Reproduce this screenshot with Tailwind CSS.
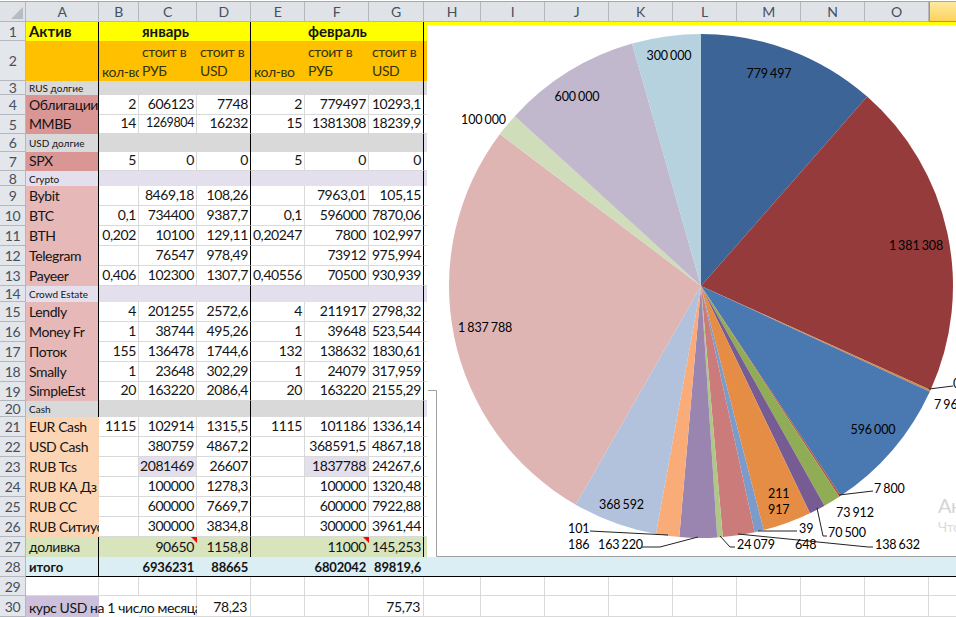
<!DOCTYPE html>
<html lang="en">

<head>
    <meta charset="UTF-8" />
    <title>Активы</title>
    <script src="https://cdn.jsdelivr.net/npm/@tailwindcss/browser@4"></script>
</head>

<body class="bg-white h-screen overflow-hidden">
    <div class="relative mt-px w-[956px] h-[616px] overflow-hidden border-t border-[#a8a8a8] font-['Lato','Noto_Sans',sans-serif] text-[14px] tracking-[-0.4px] text-[#141414]">
        <!-- Sheet -->
        <div id="sheet"
            class="grid grid-cols-[26px_73px_40px_58px_54px_54px_64px_55px_57px_64px_64px_64px_64px_64px_64px_64px_64px] grid-rows-[20px_19px_40px_14px_20px_19px_18px_19px_15px_20px_20px_20px_20px_20px_16px_20px_20px_20px_20px_19px_16px_20px_20px_20px_20px_20px_20px_20px_20px_19px_21px]">
        </div>

        <!-- Chart -->
        <div class="absolute left-[427px] top-[23px] w-[530px] h-[532px] bg-white">
            <svg id="pie" width="530" height="532" viewBox="427 25 530 532" class="block"></svg>
        </div>
        <div class="absolute left-[938px] top-[493px] text-[20px] text-[#d4d4d4] leading-none">Ак</div>
        <div class="absolute left-[938px] top-[518px] text-[14px] text-[#dcdcdc] leading-none">Что</div>
    </div>

    <script>
        const colLetters = ["A", "B", "C", "D", "E", "F", "G", "H", "I", "J", "K", "L", "M", "N", "O", "P"];
        const PINK = "bg-[#e6b8b7]", ROSE = "bg-[#da9694]", PEACH = "bg-[#fcd5b4]";

        // [number, label, A fill, values B..G]
        const rows = [
            [4, "Облигации", ROSE, ["2", "606123", "7748", "2", "779497", "10293,1"]],
            [5, "ММВБ", ROSE, ["14", "1269804", "16232", "15", "1381308", "18239,9"]],
            [7, "SPX", ROSE, ["5", "0", "0", "5", "0", "0"]],
            [9, "Bybit", PINK, ["", "8469,18", "108,26", "", "7963,01", "105,15"]],
            [10, "BTC", PINK, ["0,1", "734400", "9387,7", "0,1", "596000", "7870,06"]],
            [11, "BTH", PINK, ["0,202", "10100", "129,11", "0,20247", "7800", "102,997"]],
            [12, "Telegram", PINK, ["", "76547", "978,49", "", "73912", "975,994"]],
            [13, "Payeer", PINK, ["0,406", "102300", "1307,7", "0,40556", "70500", "930,939"]],
            [15, "Lendly", PINK, ["4", "201255", "2572,6", "4", "211917", "2798,32"]],
            [16, "Money Fr", PINK, ["1", "38744", "495,26", "1", "39648", "523,544"]],
            [17, "Поток", PINK, ["155", "136478", "1744,6", "132", "138632", "1830,61"]],
            [18, "Smally", PINK, ["1", "23648", "302,29", "1", "24079", "317,959"]],
            [19, "SimpleEst", PINK, ["20", "163220", "2086,4", "20", "163220", "2155,29"]],
            [21, "EUR Cash", PEACH, ["1115", "102914", "1315,5", "1115", "101186", "1336,14"]],
            [22, "USD Cash", PEACH, ["", "380759", "4867,2", "", "368591,5", "4867,18"]],
            [23, "RUB Tcs", PEACH, ["", "2081469", "26607", "", "1837788", "24267,6"]],
            [24, "RUB КА Дз", PEACH, ["", "100000", "1278,3", "", "100000", "1320,48"]],
            [25, "RUB CC", PEACH, ["", "600000", "7669,7", "", "600000", "7922,88"]],
            [26, "RUB Ситиус", PEACH, ["", "300000", "3834,8", "", "300000", "3961,44"]],
        ];
        const sections = {
            3: ["RUS долгие", "bg-[#d9d9d9]", "bg-[#d9d9d9]"],
            6: ["USD долгие", "bg-[#d9d9d9]", "bg-[#e4dfec]"],
            8: ["Crypto", "bg-[#e4dfec]", "bg-[#e4dfec]"],
            14: ["Crowd Estate", "bg-[#e4dfec]", "bg-[#e4dfec]"],
            20: ["Cash", "bg-[#d9d9d9]", "bg-[#e4dfec]"],
        };

        const sheet = document.getElementById("sheet");
        const GRID = "border-r border-b border-[#d9d9d9]";
        const RULE = "border-r border-r-black";
        const BOLD = "font-bold text-[15px] tracking-normal pl-[3px] items-center";
        let html = "";

        function cell(cls, text = "", align = "items-end") {
            html += `<div class="flex ${align} whitespace-nowrap ${cls}">${text}</div>`;
        }
        function clip(cls, text = "") {
            cell(`overflow-hidden ${cls}`, text);
        }
        function rowHead(n) {
            html += `<div class="flex items-center justify-center bg-[#e3e6ea] border-r border-b border-[#b4b8be] text-[#46505e]">${n}</div>`;
        }
        // vertical rule at the right of D and G
        function fill(cls) {
            for (let c = 1; c <= 6; c++) cell(`${cls} ${c === 3 || c === 6 ? RULE : ""}`);
        }
        function emptyRight(cls, count = 9) {
            for (let i = 0; i < count; i++) cell(cls);
        }

        // Column headers
        html += `<div class="bg-[#dfe3e8] border-r border-b border-[#b4b8be] flex items-end justify-end p-[2px]"><span class="w-0 h-0 border-l-[12px] border-l-transparent border-b-[12px] border-b-[#b6bcc4]"></span></div>`;
        colLetters.forEach(l => {
            if (l === "P") {
                html += `<div class="border-l border-b border-[#c8913a] bg-[linear-gradient(#fee9a0,#fdd25c)]"></div>`;
            } else {
                html += `<div class="flex items-center justify-center border-r border-b border-[#b4b8be] bg-[#dfe3e8] text-[#46505e]">${l}</div>`;
            }
        });

        // Row 1
        rowHead(1);
        cell(`bg-[#ffff00] ${RULE} ${BOLD}`, "Актив", "");
        cell("bg-[#ffff00]");
        cell(`bg-[#ffff00] ${BOLD}`, "январь", "");
        cell(`bg-[#ffff00] ${RULE}`);
        cell("bg-[#ffff00]");
        cell(`bg-[#ffff00] ${BOLD}`, "февраль", "");
        cell(`bg-[#ffff00] ${RULE}`);
        emptyRight("bg-[#ffff00]");

        // Row 2
        rowHead(2);
        const head2 = "bg-[#ffc000] text-[#33330c] pl-[3px] leading-[19px] pt-[1px]";
        cell(`bg-[#ffc000] ${RULE}`);
        clip("bg-[#ffc000] text-[#33330c] pl-[3px] leading-[18px]", "кол-во");
        cell(head2, "стоит в<br>РУБ", "items-start");
        cell(`${head2} ${RULE}`, "стоит в<br>USD", "items-start");
        clip("bg-[#ffc000] text-[#33330c] pl-[3px] leading-[18px]", "кол-во");
        cell(head2, "стоит в<br>РУБ", "items-start");
        cell(`${head2} ${RULE}`, "стоит в<br>USD", "items-start");
        emptyRight("bg-[#ffc000]");

        // Rows 3..26
        for (let n = 3; n <= 26; n++) {
            rowHead(n);
            if (sections[n]) {
                const [label, bg, right] = sections[n];
                cell(`${bg} ${RULE} text-[10px] tracking-normal leading-none pl-[3px]`, label, "items-center");
                fill(bg);
                cell(right);
                emptyRight("bg-white", 8);
                continue;
            }
            const [, name, aFill, vals] = rows.find(r => r[0] === n);
            clip(`${aFill} ${n <= 19 ? RULE : ""} pl-[3px] leading-[21px]`, name);
            vals.forEach((v, i) => {
                const edge = (i === 2 || i === 5) ? `border-b border-b-[#d9d9d9] ${RULE}` : GRID;
                const tint = n === 23 && (i === 1 || i === 4) ? "bg-[#e4dfec]" : "";
                const size = n === 5 && i === 1 ? "text-[12.5px]" : "";
                cell(`${edge} ${tint} ${size} justify-end pr-[2px] leading-[21px]`, v);
            });
            emptyRight(GRID);
        }

        // Row 27
        rowHead(27);
        const GREEN = "bg-[#d8e4bc] leading-[21px]";
        const flag = `<span class="absolute right-0 top-0 w-0 h-0 border-l-[6px] border-l-transparent border-t-[6px] border-t-[#ff0000]"></span>`;
        cell(`${GREEN} ${RULE} pl-[3px]`, "доливка");
        cell(GREEN);
        cell(`${GREEN} relative justify-end pr-[3px]`, `90650${flag}`);
        cell(`${GREEN} ${RULE} justify-end pr-[2px]`, "1158,8");
        cell(GREEN);
        cell(`${GREEN} relative justify-end pr-[3px]`, `11000${flag}`);
        cell(`${GREEN} ${RULE} justify-end pr-[2px]`, "145,253");
        emptyRight(GREEN);

        // Row 28
        rowHead(28);
        const BLUE = "bg-[#daeef3] border-b border-b-black leading-[18px]";
        const TOTAL = "font-bold text-[13px] tracking-[-0.2px] justify-end pr-[3px]";
        cell(`${BLUE} ${RULE} font-bold text-[13px] tracking-normal pl-[3px]`, "итого");
        cell(BLUE);
        cell(`${BLUE} ${TOTAL}`, "6936231");
        cell(`${BLUE} ${TOTAL}`, "88665");
        cell(BLUE);
        cell(`${BLUE} ${TOTAL}`, "6802042");
        cell(`${BLUE} ${TOTAL}`, "89819,6");
        emptyRight(BLUE);

        // Row 29
        rowHead(29);
        emptyRight(GRID, 16);

        // Row 30: the label runs on over B and C and stops at D
        rowHead(30);
        cell("bg-[#ccc0da] relative z-10 pl-[3px] leading-[19px]",
            `<span class="block shrink-0 w-[168px] overflow-hidden">курс USD на 1 число месяца</span>`);
        cell("");
        cell("border-r border-b border-[#d9d9d9]");
        cell(`${GRID} justify-end pr-[3px] leading-[19px]`, "78,23");
        cell(GRID);
        cell(GRID);
        cell(`${GRID} justify-end pr-[3px] leading-[19px]`, "75,73");
        emptyRight(GRID);
        sheet.innerHTML = html;

        // Pie, clockwise from twelve o'clock
        const slices = [
            [779497, "#3c6496"], [1381308, "#953b3b"], [7963, "#c98a4f"], [596000, "#4a78b0"],
            [7800, "#b5523f"], [73912, "#90ac55"], [70500, "#775c94"], [211917, "#e68d45"],
            [39648, "#7b9ccb"], [138632, "#cb7b79"], [24079, "#afc685"], [163220, "#9a85b0"],
            [101186, "#f9ab78"], [368592, "#b3c2dc"], [1837788, "#dfb5b4"], [100000, "#cfddbb"],
            [600000, "#c2b8ce"], [300000, "#b6d2df"],
        ];
        const total = slices.reduce((s, x) => s + x[0], 0);
        const cx = 701, cy = 286, r = 252;
        let svg = "", angle = 0;
        slices.forEach(([v, color]) => {
            const a0 = angle, a1 = angle + v / total * Math.PI * 2;
            angle = a1;
            const p = a => `${(cx + r * Math.sin(a)).toFixed(2)} ${(cy - r * Math.cos(a)).toFixed(2)}`;
            svg += `<path d="M${cx} ${cy} L${p(a0)} A${r} ${r} 0 ${a1 - a0 > Math.PI ? 1 : 0} 1 ${p(a1)} Z" fill="${color}"/>`;
        });

        // Leader lines
        [
            "929,389 953,386", "839,495 873,491", "817,508 823,536 827,536", "758,531 797,531",
            "738,534 868,547 873,547", "720,536 730,547 735,547", "642,547 660,547 698,537", "590,531 668,535",
        ].forEach(pts => {
            svg += `<polyline points="${pts}" fill="none" stroke="#222" stroke-width="1"/>`;
        });
        svg += `<polyline points="428,390.5 436.5,390.5 436.5,556.5 956,556.5" fill="none" stroke="#a0a0a0" stroke-width="1"/>`;

        // Labels [x, y, text, anchor]
        [
            [769, 73, "779 497", "middle"], [916, 245, "1 381 308", "middle"], [873, 429, "596 000", "middle"],
            [874, 488, "7 800", "start"], [836, 512, "73 912", "start"], [828, 532, "70 500", "start"],
            [799, 528, "39", "start"], [795, 544, "648", "start"], [875, 544, "138 632", "start"],
            [737, 544, "24 079", "start"], [598, 544, "163 220", "start"], [568, 528, "101", "start"],
            [568, 544, "186", "start"], [599, 504, "368 592", "start"], [768, 493, "211", "start"],
            [768, 509, "917", "start"], [458, 327, "1 837 788", "start"], [461, 119, "100 000", "start"],
            [577, 96, "600 000", "middle"], [669, 55, "300 000", "middle"], [953, 383, "0", "start"],
            [934, 404, "7 963", "start"],
        ].forEach(([x, y, t, anchor]) => {
            svg += `<text x="${x}" y="${y}" text-anchor="${anchor}" dominant-baseline="central" font-size="12.5" letter-spacing="-0.1" word-spacing="-1" fill="#000">${t}</text>`;
        });
        document.getElementById("pie").innerHTML = svg;
    </script>
</body>

</html>
